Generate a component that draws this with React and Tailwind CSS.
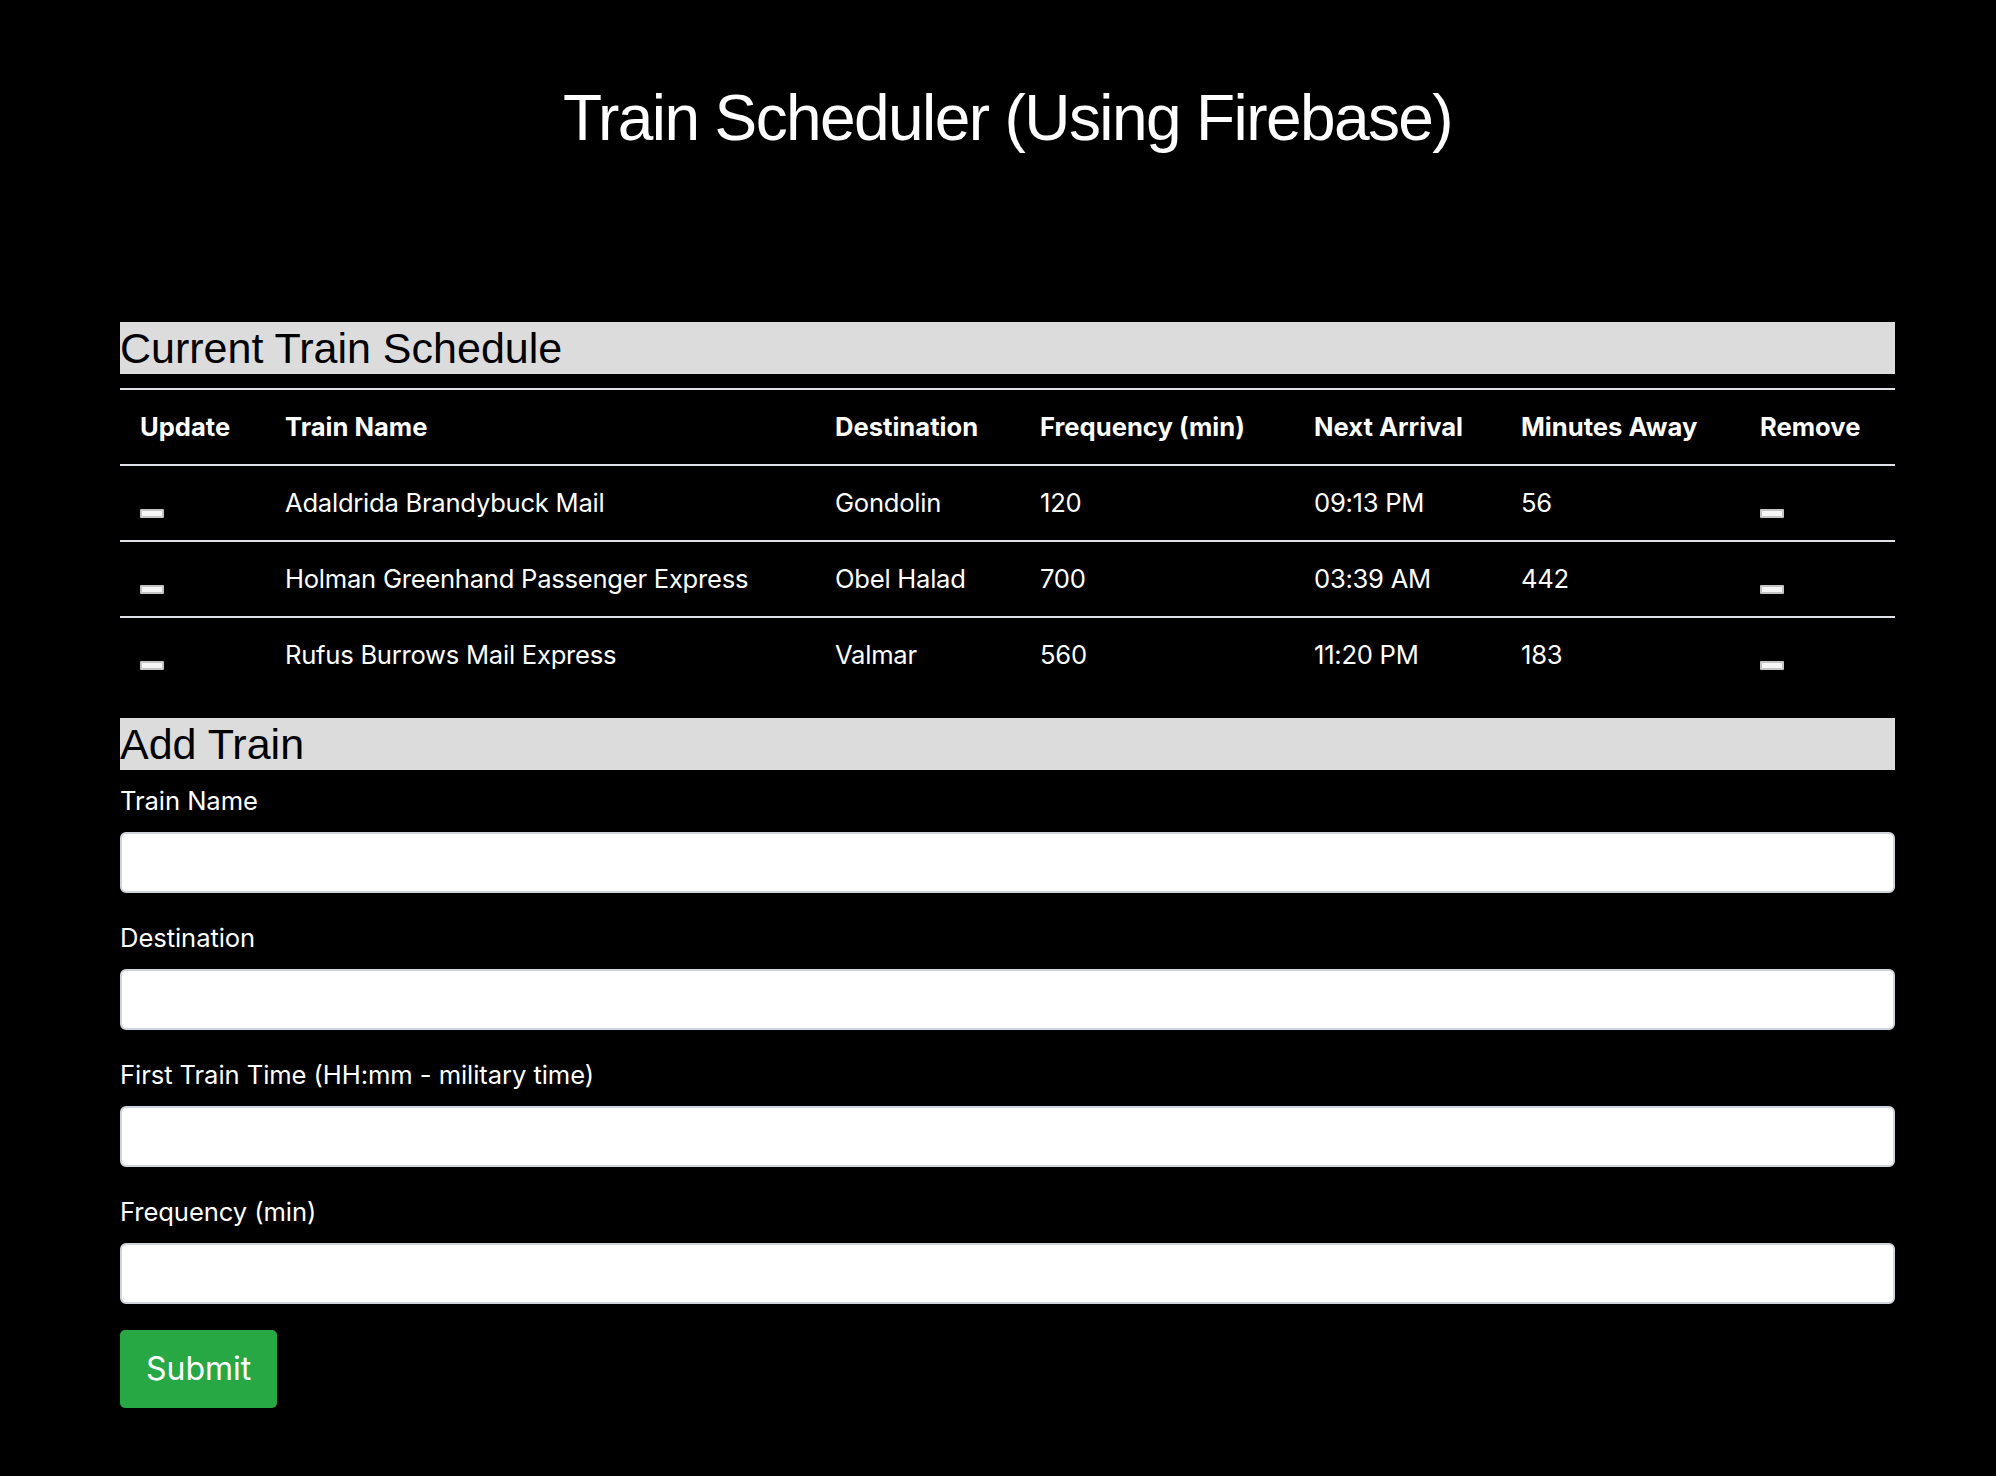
import React from 'react';

const trains = [
  { name: 'Adaldrida Brandybuck Mail', destination: 'Gondolin', frequency: 120, next: '09:13 PM', away: 56 },
  { name: 'Holman Greenhand Passenger Express', destination: 'Obel Halad', frequency: 700, next: '03:39 AM', away: 442 },
  { name: 'Rufus Burrows Mail Express', destination: 'Valmar', frequency: 560, next: '11:20 PM', away: 183 },
];

const fields = ['Train Name', 'Destination', 'First Train Time (HH:mm - military time)', 'Frequency (min)'];

const MiniButton = () => (
  <button
    type="button"
    className="inline-block h-[9px] w-[24px] rounded-[1px] border-2 border-[#c4c4c4] bg-[#f6f6f6] p-0 align-[-4px]"
  />
);

const SectionBar = ({ children }) => (
  <h2 className="h-[52px] bg-[#dcdcdc] font-['Liberation_Sans',Arial,sans-serif] text-[43px] font-normal leading-[52px] text-black">
    {children}
  </h2>
);

export default function App() {
  return (
    <div className="min-h-screen bg-black pb-[69px] font-['Inter','Noto_Sans',sans-serif] text-[25.6px] text-white">
      <div className="ml-[120px] w-[1775px]">
        <h1 className="pt-[80px] text-center font-['Liberation_Sans',Arial,sans-serif] text-[64px] font-normal leading-[77px] tracking-[-0.025em]">
          Train Scheduler (Using Firebase)
        </h1>

        <div className="mt-[165px]">
          <SectionBar>Current Train Schedule</SectionBar>
          <table className="mt-[14px] mb-[26px] w-full table-fixed border-collapse text-left">
            <thead>
              <tr className="border-y-2 border-[#dee2e6]">
                <th className="w-[145px] px-[20px] py-[18px] font-bold leading-[38px]">Update</th>
                <th className="w-[550px] px-[20px] py-[18px] font-bold leading-[38px]">Train Name</th>
                <th className="w-[205px] px-[20px] py-[18px] font-bold leading-[38px]">Destination</th>
                <th className="w-[274px] px-[20px] py-[18px] font-bold leading-[38px]">Frequency (min)</th>
                <th className="w-[207px] px-[20px] py-[18px] font-bold leading-[38px]">Next Arrival</th>
                <th className="w-[239px] px-[20px] py-[18px] font-bold leading-[38px]">Minutes Away</th>
                <th className="w-[155px] px-[20px] py-[18px] font-bold leading-[38px]">Remove</th>
              </tr>
            </thead>
            <tbody className="tracking-[-0.01em]">
              {trains.map((train, i) => (
                <tr key={train.name} className={i > 0 ? 'border-t-2 border-[#dee2e6]' : ''}>
                  <td className="px-[20px] py-[18px] leading-[38px]"><MiniButton /></td>
                  <td className="px-[20px] py-[18px] leading-[38px]">{train.name}</td>
                  <td className="px-[20px] py-[18px] leading-[38px]">{train.destination}</td>
                  <td className="px-[20px] py-[18px] leading-[38px]">{train.frequency}</td>
                  <td className="px-[20px] py-[18px] leading-[38px]">{train.next}</td>
                  <td className="px-[20px] py-[18px] leading-[38px]">{train.away}</td>
                  <td className="px-[20px] py-[18px] leading-[38px]"><MiniButton /></td>
                </tr>
              ))}
            </tbody>
          </table>
        </div>

        <form onSubmit={(e) => e.preventDefault()}>
          <SectionBar>Add Train</SectionBar>
          <div className="mt-[12px] flex flex-col gap-[26px]">
            {fields.map((label) => (
              <div key={label}>
                <label className="mb-[12px] block leading-[38px] tracking-[-0.003em]">{label}</label>
                <input
                  type="text"
                  className="block h-[61px] w-full rounded-[6px] border-2 border-[#ced4da] bg-white px-[19px] text-black outline-none"
                />
              </div>
            ))}
            <div>
              <button
                type="submit"
                className="h-[78px] rounded-[5px] bg-[#28a745] px-[26px] text-[32px] leading-[48px] text-white"
              >
                Submit
              </button>
            </div>
          </div>
        </form>
      </div>
    </div>
  );
}
